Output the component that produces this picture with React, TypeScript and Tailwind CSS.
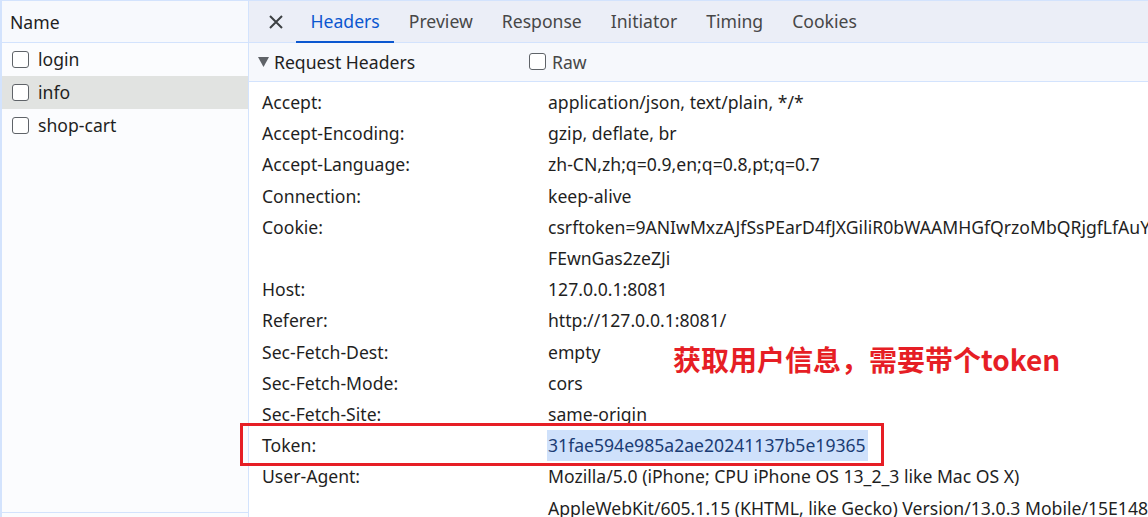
import React from 'react';

const font = { fontFamily: '"Noto Sans", "Noto Sans CJK SC", sans-serif' };

const tabs = ['Headers', 'Preview', 'Response', 'Initiator', 'Timing', 'Cookies'];

const rows: { name: string; lines: string[] }[] = [
  { name: 'Accept:', lines: ['application/json, text/plain, */*'] },
  { name: 'Accept-Encoding:', lines: ['gzip, deflate, br'] },
  { name: 'Accept-Language:', lines: ['zh-CN,zh;q=0.9,en;q=0.8,pt;q=0.7'] },
  { name: 'Connection:', lines: ['keep-alive'] },
  {
    name: 'Cookie:',
    lines: ['csrftoken=9ANIwMxzAJfSsPEarD4fJXGiliR0bWAAMHGfQrzoMbQRjgfLfAuYk2pLq', 'FEwnGas2zeZJi'],
  },
  { name: 'Host:', lines: ['127.0.0.1:8081'] },
  { name: 'Referer:', lines: ['http://127.0.0.1:8081/'] },
  { name: 'Sec-Fetch-Dest:', lines: ['empty'] },
  { name: 'Sec-Fetch-Mode:', lines: ['cors'] },
  { name: 'Sec-Fetch-Site:', lines: ['same-origin'] },
  { name: 'Token:', lines: ['31fae594e985a2ae20241137b5e19365'] },
  {
    name: 'User-Agent:',
    lines: ['Mozilla/5.0 (iPhone; CPU iPhone OS 13_2_3 like Mac OS X)', 'AppleWebKit/605.1.15 (KHTML, like Gecko) Version/13.0.3 Mobile/15E148'],
  },
];

const Box = () => (
  <span className="inline-block w-[17px] h-[17px] rounded-[3px] border-[1.5px] border-[#5f6368] bg-white shrink-0" />
);

export default function App() {
  return (
    <div style={font} className="relative w-[1148px] h-[517px] overflow-hidden bg-white text-[#1f1f1f] text-[17.6px]">
      <div className="flex h-full border-t border-[#d3e3fd]">
        {/* request list */}
        <div className="w-[249px] shrink-0 flex flex-col border-l-2 border-r border-[#d3e3fd] bg-[#fbfcfe]">
          <div className="h-[42px] shrink-0 flex items-center pl-[8px] pt-[1px] border-b border-[#d3e3fd] bg-[#f7f9fd] text-[#1f1f1f]">Name</div>
          <div className="flex-1 flex flex-col">
            {['login', 'info', 'shop-cart'].map((n) => (
              <div
                key={n}
                className={`h-[33px] shrink-0 flex items-center gap-[9px] pl-[10px] ${n === 'info' ? 'bg-[#e1e3e1]' : ''}`}
              >
                <Box />
                <span>{n}</span>
              </div>
            ))}
          </div>
          <div className="h-[5px] shrink-0 border-t border-[#d3e3fd]" />
        </div>

        {/* details */}
        <div className="flex-1 flex flex-col min-w-0">
          <div className="h-[42px] shrink-0 flex items-stretch bg-[#ebeef7] border-b border-[#d3e3fd]">
            <div className="w-[40px] flex items-center justify-end pr-[5px]">
              <svg width="16" height="16" viewBox="0 0 16 16">
                <path d="M2 2 L14 14 M14 2 L2 14" stroke="#3c4043" strokeWidth="2" />
              </svg>
            </div>
            <div className="flex ml-[7px]">
              {tabs.map((t) => (
                <div
                  key={t}
                  className={`px-[14.5px] pt-[1px] flex items-center border-b-2 -mb-px ${
                    t === 'Headers' ? 'text-[#0b57d0] border-[#0b57d0]' : 'text-[#474747] border-transparent'
                  }`}
                >
                  {t}
                </div>
              ))}
            </div>
          </div>
          <div className="h-[39px] shrink-0 flex items-center bg-[#f6f8fc] border-b border-[#d3e3fd]">
            <div className="w-[280px] flex items-center pl-[9px] gap-[5px]">
              <svg width="11" height="10" viewBox="0 0 11 10">
                <path d="M0 0 H11 L5.5 10 Z" fill="#5f6368" />
              </svg>
              <span>Request Headers</span>
            </div>
            <div className="flex items-center gap-[6px]">
              <Box />
              <span className="text-[#474747]">Raw</span>
            </div>
          </div>
          <div className="pt-[5px] pl-[13px] flex flex-col">
            {rows.map((r) => (
              <div key={r.name} className="flex leading-[31.2px] shrink-0">
                <div className="w-[286px] shrink-0">{r.name}</div>
                <div className="flex flex-col whitespace-nowrap">
                  {r.lines.map((l) =>
                    r.name === 'Token:' ? (
                      <span key={l} className="self-start bg-[#cfe1fb] text-[#1b3c74] pl-[1px] pr-[2px] -ml-[1px]">
                        {l}
                      </span>
                    ) : (
                      <span key={l}>{l}</span>
                    )
                  )}
                </div>
              </div>
            ))}
          </div>
        </div>
      </div>

      {/* annotation */}
      <div className="absolute left-[240px] top-[423px] w-[644px] h-[43px] border-[3px] border-[#e61e25]" />
      <div
        className="absolute left-[673px] top-[345px] text-[28px] font-bold text-[#e61e25] leading-none"
        style={{ fontFamily: '"Noto Sans CJK SC", sans-serif' }}
      >
        获取用户信息，需要带个token
      </div>
    </div>
  );
}
